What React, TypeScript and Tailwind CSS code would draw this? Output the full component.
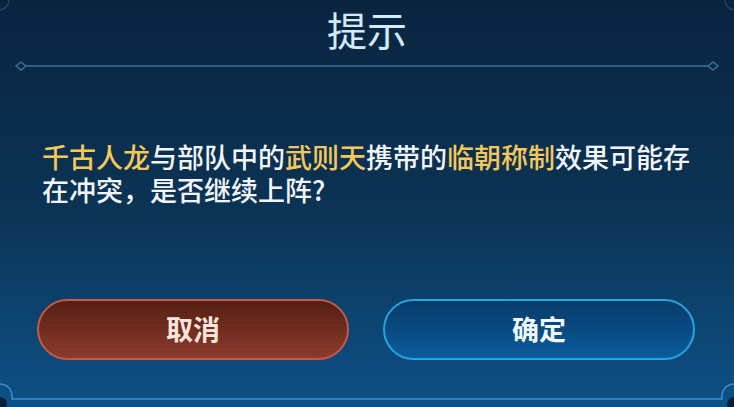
import React from "react";

const FONT = "font-['Noto_Sans_CJK_SC','Noto_Sans',sans-serif]";

const Divider = () => (
  <svg width="734" height="12" viewBox="0 0 734 12" className="block">
    <line x1="26" y1="6" x2="708" y2="6" stroke="#2f5f86" strokeWidth="2" />
    <path d="M16 6 L21 2 L26 6 L21 10 Z" fill="none" stroke="#3a6f99" strokeWidth="1.5" />
    <path d="M708 6 L713 2 L718 6 L713 10 Z" fill="none" stroke="#3a6f99" strokeWidth="1.5" />
  </svg>
);

const Frame = () => (
  <svg
    width="734"
    height="407"
    viewBox="0 0 734 407"
    className="absolute inset-0 pointer-events-none"
  >
    <path d="M0 10 A 10 10 0 0 0 9 0" fill="none" stroke="#24496a" strokeWidth="1.2" />
    <path d="M734 10 A 10 10 0 0 1 725 0" fill="none" stroke="#24496a" strokeWidth="1.2" />
    <path
      d="M0 384 A 12 12 0 0 1 12 396 L12 399 L722 399 L722 396 A 12 12 0 0 1 734 384"
      fill="none"
      stroke="#3f8fcc"
      strokeWidth="1.5"
    />
    <circle cx="0" cy="404" r="7" fill="#06203a" />
    <circle cx="734" cy="404" r="7" fill="#06203a" />
  </svg>
);

const Hl = ({children}: {children: React.ReactNode}) => (
  <span className="text-[#f5c85c]">{children}</span>
);

export default function App() {
  return (
    <div
      className={`relative w-[734px] h-[407px] overflow-hidden bg-gradient-to-b from-[#0a2440] via-[#0b3354] to-[#0d5187] ${FONT}`}
    >
      <Frame />
      <div className="flex flex-col">
        <div className="h-[60px] flex items-center justify-center pb-[2px]">
          <span className="text-[40px] leading-none text-[#d2eafa]">提示</span>
        </div>
        <Divider />
        <div className="pl-[42px] pt-[68px] text-[27px] leading-[33px] font-medium text-[#f2f6fa] whitespace-nowrap">
          <Hl>千古人龙</Hl>与部队中的<Hl>武则天</Hl>携带的<Hl>临朝称制</Hl>效果可能存
          <br />
          在冲突，是否继续上阵?
        </div>
        <div className="flex gap-[34px] pl-[37px] pt-[93px]">
          <button className="w-[312px] h-[61px] rounded-full border-2 border-[#c15a4b] bg-gradient-to-b from-[#561f14] to-[#8c3b2d] text-[27px] font-bold text-[#fbe6dd] flex items-center justify-center">
            取消
          </button>
          <button className="w-[312px] h-[61px] rounded-full border-2 border-[#25a6e0] bg-gradient-to-b from-[#083b69] to-[#0a5c9c] text-[27px] font-bold text-[#eef8ff] flex items-center justify-center">
            确定
          </button>
        </div>
      </div>
    </div>
  );
}
